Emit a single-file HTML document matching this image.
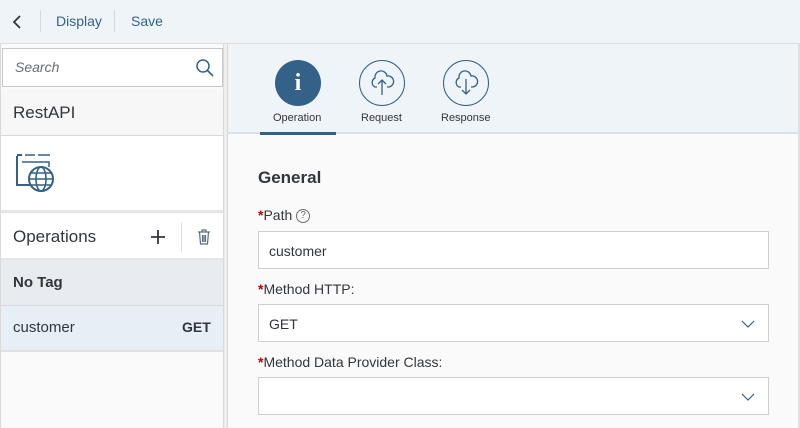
<!DOCTYPE html>
<html><head><style>
*{box-sizing:border-box;margin:0;padding:0}
body{width:800px;height:428px;overflow:hidden;font-family:"Liberation Sans",Arial,sans-serif;background:#fafafa;position:relative;color:#32363a}
.a{position:absolute}
.top{left:0;top:0;width:800px;height:44px;background:#eff4f9;border-bottom:1px solid #d9dee3}
.tb{font-size:14px;color:#346187;top:13px}
.sep{top:10px;width:1px;height:22px;background:#d4d9de}
.left{left:0;top:44px;width:224px;height:384px;background:#fafafa;border-left:1px solid #d9d9d9}
.split{left:223px;top:44px;width:5px;height:384px;background:#eceef0;border-left:1px solid #d9d9d9;border-right:1px solid #d9d9d9}
.tabs{left:228px;top:44px;width:572px;height:90px;background:#eff4f9;border-bottom:2px solid #d8e2ec}
.lbl{font-size:14px;color:#32363a}
.req{color:#bb0000;font-weight:bold}
.inp{left:258px;width:511px;height:38px;background:#fff;border:1px solid #cfcfcf;font-size:14px;padding:11px 10px}
</style></head><body>
<div class="a top"></div>
<svg class="a" style="left:10px;top:13px" width="14" height="18"><path d="M10 3 L4 9 L10 15" stroke="#32363a" stroke-width="1.8" fill="none"/></svg>
<div class="a sep" style="left:40px"></div>
<div class="a tb" style="left:56px">Display</div>
<div class="a sep" style="left:114px"></div>
<div class="a tb" style="left:131px">Save</div>

<div class="a left"></div>
<div class="a" style="left:2px;top:48px;width:221px;height:39px;background:#fff;border:1px solid #c8c8c8"></div>
<div class="a" style="left:15px;top:59px;font-size:14px;font-style:italic;color:#6a6d70">Search</div>
<svg class="a" style="left:195px;top:58px" width="20" height="20"><circle cx="8" cy="8" r="6" stroke="#346187" stroke-width="1.5" fill="none"/><path d="M12.5 12.5 L18 18" stroke="#346187" stroke-width="1.6"/></svg>
<div class="a" style="left:1px;top:89px;width:222px;height:47px;background:#f7f7f7;border-bottom:1px solid #d9d9d9"></div>
<div class="a" style="left:13px;top:103px;font-size:17px;color:#32363a">RestAPI</div>
<div class="a" style="left:1px;top:136px;width:222px;height:77px;background:#fff;border-bottom:3px solid #e5e5e5"></div>
<svg class="a" style="left:15px;top:152px" width="42" height="42"><path d="M2 2 H7 V4 H2 Z" fill="#346187"/><path d="M10 3 H20 M23 3 H35" stroke="#346187" stroke-width="1.5"/><path d="M2 4 V33 H17" stroke="#346187" stroke-width="2" fill="none"/><path d="M7 10 H34 V15" stroke="#346187" stroke-width="1.5" fill="none"/><circle cx="26" cy="27" r="12" stroke="#346187" stroke-width="2" fill="#fff"/><ellipse cx="26" cy="27" rx="5" ry="12" stroke="#346187" stroke-width="1.6" fill="none"/><path d="M14 27 H38 M16 21 H36 M16 33 H36" stroke="#346187" stroke-width="1.5"/></svg>
<div class="a" style="left:1px;top:214px;width:222px;height:46px;background:#fff;border-bottom:2px solid #e5e5e5"></div>
<div class="a" style="left:13px;top:227px;font-size:17px">Operations</div>
<svg class="a" style="left:150px;top:229px" width="16" height="16"><path d="M8 1 V15 M1 8 H15" stroke="#32363a" stroke-width="1.8"/></svg>
<div class="a" style="left:181px;top:222px;width:1px;height:30px;background:#e0e0e0"></div>
<svg class="a" style="left:197px;top:229px" width="14" height="16"><path d="M1 3 H13 M5 3 V1 H9 V3 M2.5 3 L3.5 15 H10.5 L11.5 3 M5.5 6 V13 M7 6 V13 M8.5 6 V13" stroke="#5b6d80" stroke-width="1.2" fill="none"/></svg>
<div class="a" style="left:1px;top:260px;width:222px;height:46px;background:#e8ebef;border-bottom:1px solid #d5dadf"></div>
<div class="a" style="left:13px;top:274px;font-size:15px;font-weight:bold;color:#32363a">No Tag</div>
<div class="a" style="left:1px;top:306px;width:222px;height:46px;background:#e6eef6;border-bottom:2px solid #e0e0e0"></div>
<div class="a" style="left:13px;top:319px;font-size:15px;color:#32363a">customer</div>
<div class="a" style="left:182px;top:319px;font-size:14px;font-weight:bold;color:#32363a">GET</div>

<div class="a split"></div>
<div class="a tabs"></div>
<div class="a" style="left:275px;top:60px;width:46px;height:46px;border-radius:50%;background:#346187;color:#fff;font-family:'Liberation Serif',serif;font-weight:bold;font-size:24px;text-align:center;line-height:46px">i</div>
<div class="a" style="left:359px;top:60px;width:46px;height:46px;border-radius:50%;border:1px solid #346187"></div>
<div class="a" style="left:443px;top:60px;width:46px;height:46px;border-radius:50%;border:1px solid #346187"></div>
<svg class="a" style="left:369px;top:69px" width="26" height="28"><path d="M8 18 H6 A5 5 0 0 1 6 9 A6 6 0 0 1 18 7 A5 5 0 0 1 20 18 H18" stroke="#346187" stroke-width="1.3" fill="none"/><path d="M13 26 V11 M9 15 L13 11 L17 15" stroke="#346187" stroke-width="1.3" fill="none"/></svg>
<svg class="a" style="left:453px;top:69px" width="26" height="28"><path d="M8 18 H6 A5 5 0 0 1 6 9 A6 6 0 0 1 18 7 A5 5 0 0 1 20 18 H18" stroke="#346187" stroke-width="1.3" fill="none"/><path d="M13 10 V25 M9 21 L13 25 L17 21" stroke="#346187" stroke-width="1.3" fill="none"/></svg>
<div class="a" style="left:273px;top:112px;font-size:11px;color:#32363a">Operation</div>
<div class="a" style="left:361px;top:112px;font-size:11px;color:#32363a">Request</div>
<div class="a" style="left:441px;top:112px;font-size:11px;color:#32363a">Response</div>
<div class="a" style="left:260px;top:132px;width:76px;height:3px;background:#346187"></div>

<div class="a" style="left:258px;top:168px;font-size:17px;font-weight:bold;color:#32363a">General</div>
<div class="a lbl" style="left:258px;top:207px"><span class="req">*</span>Path <span style="display:inline-block;width:14px;height:14px;border:1px solid #6a6d70;border-radius:50%;font-size:10px;text-align:center;line-height:12px;color:#6a6d70;vertical-align:middle">?</span></div>
<div class="a inp" style="top:231px">customer</div>
<div class="a lbl" style="left:258px;top:281px"><span class="req">*</span>Method HTTP:</div>
<div class="a inp" style="top:304px">GET</div>
<div class="a lbl" style="left:258px;top:354px"><span class="req">*</span>Method Data Provider Class:</div>
<div class="a inp" style="top:377px"></div>
<svg class="a" style="left:741px;top:319px" width="14" height="10"><path d="M1 2 L7 8 L13 2" stroke="#346187" stroke-width="1.2" fill="none"/></svg>
<svg class="a" style="left:741px;top:392px" width="14" height="10"><path d="M1 2 L7 8 L13 2" stroke="#346187" stroke-width="1.2" fill="none"/></svg>
<div class="a" style="left:798px;top:44px;width:2px;height:384px;background:#e0e0e0"></div>
</body></html>
